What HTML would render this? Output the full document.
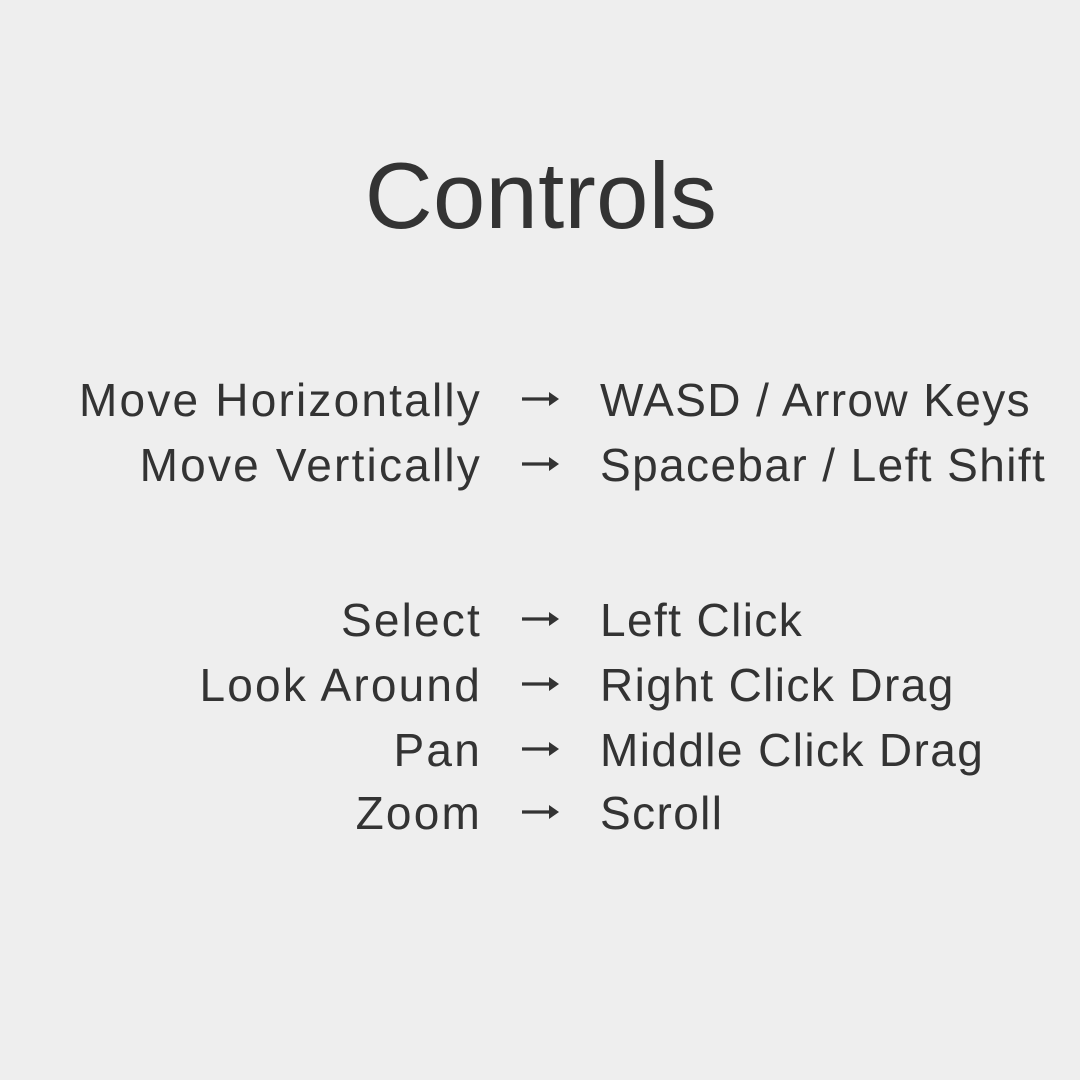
<!DOCTYPE html>
<html><head><meta charset="utf-8"><style>
html,body{margin:0;padding:0;background:#eeeeee;}
body{width:1080px;height:1080px;position:relative;overflow:hidden;font-family:"Liberation Sans",sans-serif;color:#333333;}
.t{position:absolute;width:1080px;text-align:center;font-size:94px;line-height:94px;top:149px;left:1px;letter-spacing:0.3px;}
.l,.r{position:absolute;font-size:46px;line-height:46px;white-space:nowrap;letter-spacing:2px;}
.l{right:598px;text-align:right;letter-spacing:2.2px;}
.r{left:600px;letter-spacing:1.4px;}
svg{position:absolute;left:520px;}
</style></head><body>
<div class="t">Controls</div>

<div class="l" style="top:377px">Move Horizontally</div><div class="r" style="top:377px">WASD / Arrow Keys</div>
<div class="l" style="top:442px">Move Vertically</div><div class="r" style="top:442px">Spacebar / Left Shift</div>
<div class="l" style="top:597px">Select</div><div class="r" style="top:597px">Left Click</div>
<div class="l" style="top:662px">Look Around</div><div class="r" style="top:662px">Right Click Drag</div>
<div class="l" style="top:727px">Pan</div><div class="r" style="top:727px">Middle Click Drag</div>
<div class="l" style="top:790px">Zoom</div><div class="r" style="top:790px">Scroll</div>

<svg style="top:389px" width="42" height="20" viewBox="0 0 42 20"><path d="M2 10H34" stroke="#333" stroke-width="3.2"/><path d="M29 3L39 10L29 17Z" fill="#333"/></svg>
<svg style="top:454px" width="42" height="20" viewBox="0 0 42 20"><path d="M2 10H34" stroke="#333" stroke-width="3.2"/><path d="M29 3L39 10L29 17Z" fill="#333"/></svg>
<svg style="top:609px" width="42" height="20" viewBox="0 0 42 20"><path d="M2 10H34" stroke="#333" stroke-width="3.2"/><path d="M29 3L39 10L29 17Z" fill="#333"/></svg>
<svg style="top:674px" width="42" height="20" viewBox="0 0 42 20"><path d="M2 10H34" stroke="#333" stroke-width="3.2"/><path d="M29 3L39 10L29 17Z" fill="#333"/></svg>
<svg style="top:739px" width="42" height="20" viewBox="0 0 42 20"><path d="M2 10H34" stroke="#333" stroke-width="3.2"/><path d="M29 3L39 10L29 17Z" fill="#333"/></svg>
<svg style="top:802px" width="42" height="20" viewBox="0 0 42 20"><path d="M2 10H34" stroke="#333" stroke-width="3.2"/><path d="M29 3L39 10L29 17Z" fill="#333"/></svg>
</body></html>
